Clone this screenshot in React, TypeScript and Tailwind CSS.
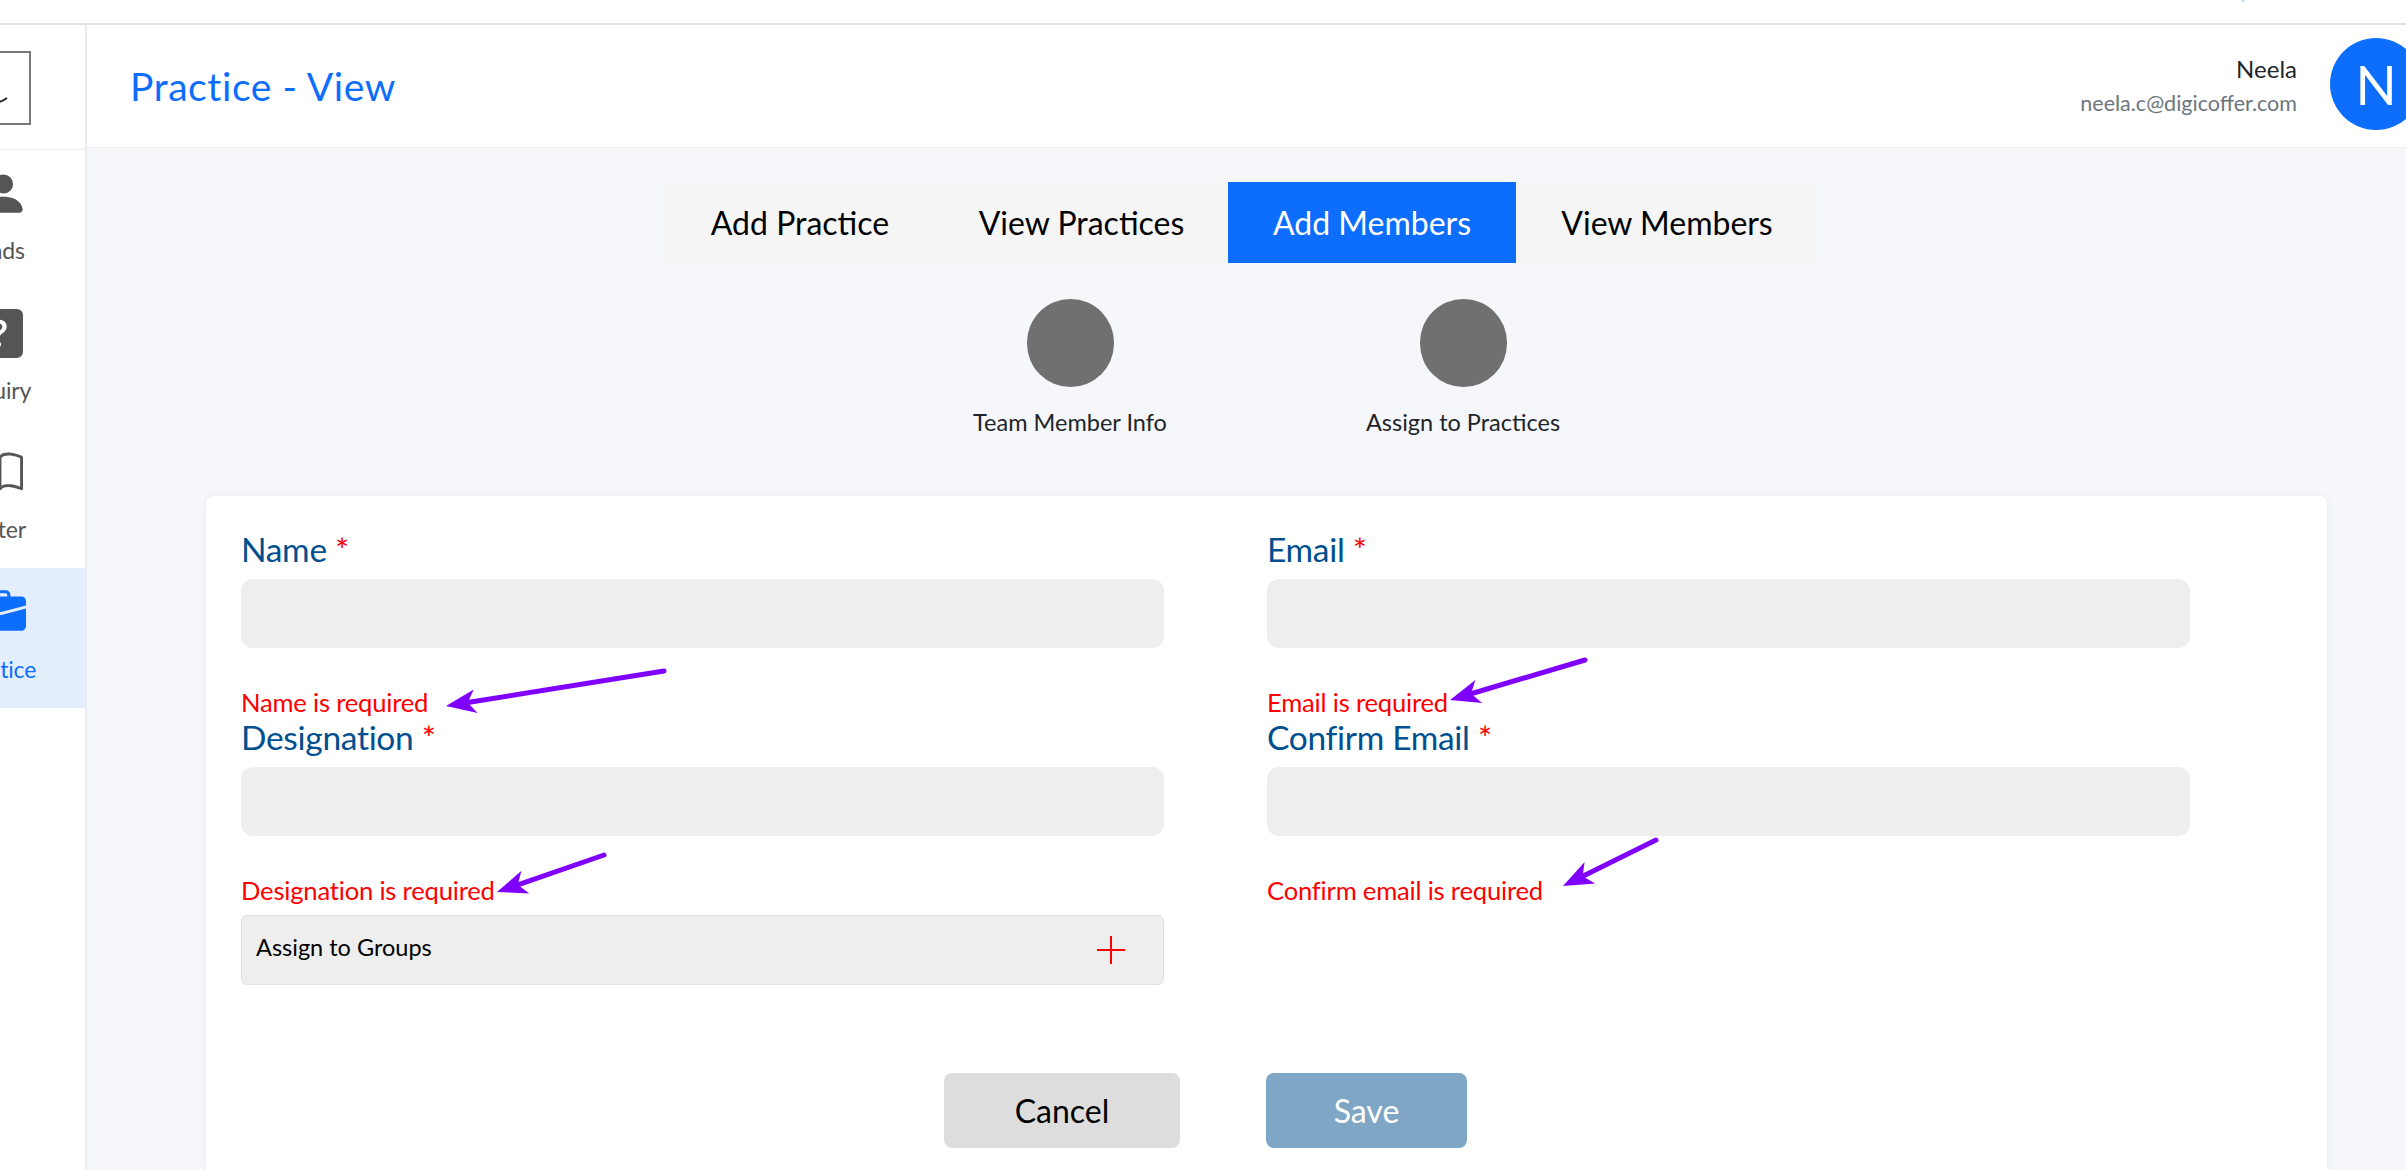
import React from "react";
import { BsPersonFill, BsQuestionSquareFill, BsBook, BsBriefcaseFill } from "react-icons/bs";

const font = "font-['Lato','Noto_Sans',sans-serif]";

function Field({ label, error, className = "" }: { label: string; error: string; className?: string }) {
  return (
    <div className={`flex flex-col h-[188px] ${className}`}>
      <div className="h-[40px] leading-[40px] text-[33.5px] text-[#00508f] tracking-[-0.3px]">
        {label} <span className="text-[#ff0000]">*</span>
      </div>
      <div className="mt-[10px] h-[69px] rounded-[12px] bg-[#eeeeee]" />
      <div className="mt-[39px] h-[30px] leading-[30px] text-[25.6px] text-[#ff0000] tracking-[-0.2px]">{error}</div>
    </div>
  );
}

function NavItem({ icon, label, active }: { icon: React.ReactNode; label: string; active?: boolean }) {
  return (
    <div className={`h-[139.5px] flex flex-col items-center ${active ? "bg-[#e3eefe] text-[#0d6efd]" : "text-[#555555]"}`}>
      <div className="mt-[22px] h-[44px] flex items-center justify-center">{icon}</div>
      <div className="mt-[19.5px] h-[30px] leading-[30px] text-[23px] tracking-[-0.2px]">{label}</div>
    </div>
  );
}

function Arrow({ x1, y1, x2, y2 }: { x1: number; y1: number; x2: number; y2: number }) {
  const a = Math.atan2(y2 - y1, x2 - x1);
  const back = 30;
  const bx = x2 - back * Math.cos(a);
  const by = y2 - back * Math.sin(a);
  const nx = -Math.sin(a);
  const ny = Math.cos(a);
  const w = 12;
  const mx = x2 - (back - 8) * Math.cos(a);
  const my = y2 - (back - 8) * Math.sin(a);
  return (
    <g>
      <line x1={x1} y1={y1} x2={mx} y2={my} stroke="#7f00ff" strokeWidth={5} strokeLinecap="round" />
      <polygon points={`${x2},${y2} ${bx + nx * w},${by + ny * w} ${mx},${my} ${bx - nx * w},${by - ny * w}`} fill="#7f00ff" />
    </g>
  );
}

export default function App() {
  return (
    <div className={`relative w-[2406px] h-[1170px] overflow-hidden bg-white ${font}`}>
      <div className="h-[25px] border-b-2 border-[#e0e0e0] bg-white" />
      <div className="absolute left-[2241px] top-0 w-[4px] h-[2px] rounded-b-full bg-[#cfe0fb]" />
      <div className="flex h-[1145px]">
        <aside className="-ml-[92px] w-[179px] shrink-0 border-r-2 border-[#e9ecef] bg-white">
          <div className="h-[124.5px] flex flex-col items-center border-b border-[#eeeeee]">
            <div className="mt-[26px] -ml-[6px] w-[74px] h-[74px] border-2 border-[#777777] flex items-end justify-center">
              <svg width="40" height="24" viewBox="0 0 40 24" className="mb-[18px]">
                <path d="M6 22 C16 24 26 22 33 17" stroke="#222222" strokeWidth="2" fill="none" />
              </svg>
            </div>
          </div>
          <NavItem icon={<BsPersonFill size={51} className="ml-[14px]" />} label="Leads" />
          <NavItem icon={<BsQuestionSquareFill size={49} className="ml-[3px]" />} label="Inquiry" />
          <NavItem icon={<BsBook size={46} className="ml-[6px]" />} label="Letter" />
          <NavItem icon={<BsBriefcaseFill size={50} className="ml-[8px]" />} label="Practice" active />
        </aside>
        <main className="flex-1 min-w-0 bg-[#f5f7fb] flex flex-col">
          <header className="h-[123px] shrink-0 bg-white border-b border-[#eeeeee] flex items-center justify-between pl-[46px]">
            <h1 className="-ml-[3px] text-[39px] leading-none text-[#0d6efd] tracking-[0.6px]">Practice - View</h1>
            <div className="flex items-center -mr-[16px]">
              <div className="text-right mr-[33px]">
                <div className="text-[24px] leading-[34px] text-[#212529]">Neela</div>
                <div className="text-[21.5px] leading-[34px] text-[#6c757d]">neela.c@digicoffer.com</div>
              </div>
              <div className="-mt-[4px] w-[92px] h-[92px] rounded-full bg-[#0d6efd] text-white text-[54px] flex items-center justify-center">N</div>
            </div>
          </header>
          <div className="pl-[119px] pr-[79px] flex-1 flex flex-col">
            <div className="self-center -ml-[50px] mt-[34px] flex h-[81px] bg-[#f5f5f5] text-[32px] text-black">
              <div className="w-[270px] flex items-center justify-center">Add Practice</div>
              <div className="w-[293px] flex items-center justify-center">View Practices</div>
              <div className="w-[288px] flex items-center justify-center bg-[#0d6efd] text-white">Add Members</div>
              <div className="w-[302px] flex items-center justify-center">View Members</div>
            </div>
            <div className="flex justify-center gap-[206px] mt-[36px] h-[137px]">
              {["Team Member Info", "Assign to Practices"].map((t) => (
                <div key={t} className="w-[187px] flex flex-col items-center">
                  <div className="w-[87px] h-[88px] rounded-full bg-[#707070] shrink-0" />
                  <div className="mt-[20px] whitespace-nowrap text-[23.5px] leading-[30px] text-[#212529]">{t}</div>
                </div>
              ))}
            </div>
            <section className="mt-[60px] flex-1 rounded-t-[8px] bg-white shadow-[0_0_8px_rgba(0,0,0,0.06)] pl-[35px] pt-[33px]">
              <div className="grid grid-cols-[923px_923px] gap-x-[103px]">
                <Field label="Name" error="Name is required" />
                <Field label="Email" error="Email is required" />
                <Field label="Designation" error="Designation is required" />
                <Field label="Confirm Email" error="Confirm email is required" />
                <div className="mt-[10px] h-[70px] rounded-[6px] border border-[#e0e0e0] bg-[#eeeeee] flex items-center justify-between pl-[14px] pr-[38px]">
                  <span className="pb-[5px] text-[23.5px] text-black">Assign to Groups</span>
                  <svg width="28" height="28" viewBox="0 0 28 28">
                    <path d="M14 0V28M0 14H28" stroke="#ff0000" strokeWidth="2" />
                  </svg>
                </div>
              </div>
              <div className="flex mt-[88px] ml-[703px] gap-[86px]">
                <button className="w-[236px] h-[75px] rounded-[8px] bg-[#dddddd] text-[32px] text-black">Cancel</button>
                <button className="w-[201px] h-[75px] rounded-[8px] bg-[#7fa6c4] text-[32px] text-white">Save</button>
              </div>
            </section>
          </div>
        </main>
      </div>
      <svg className="absolute left-0 top-0 pointer-events-none" width="2406" height="1170">
        <Arrow x1={664} y1={671} x2={446} y2={706} />
        <Arrow x1={604} y1={855} x2={497} y2={892} />
        <Arrow x1={1585} y1={660} x2={1450} y2={700} />
        <Arrow x1={1656} y1={840} x2={1563} y2={886} />
      </svg>
    </div>
  );
}
